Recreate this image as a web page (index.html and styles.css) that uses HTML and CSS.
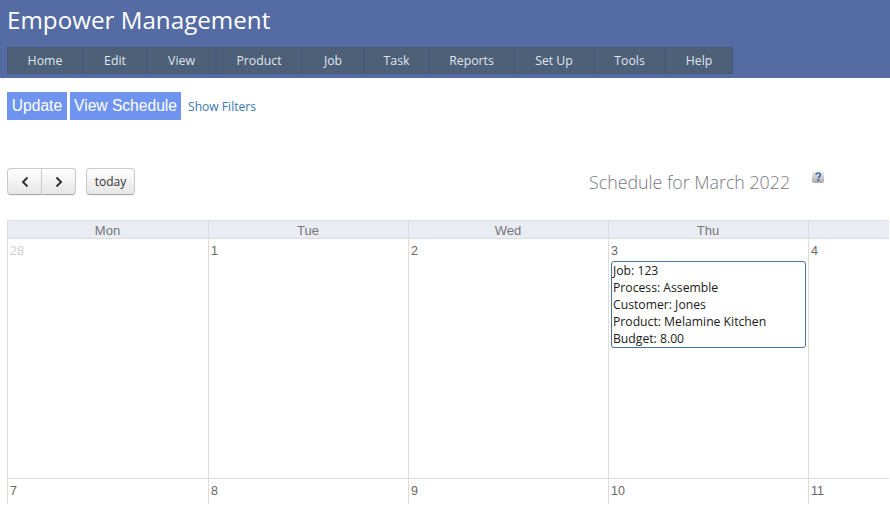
FILE: index.html
```html
<!DOCTYPE html>
<html lang="en">
<head>
<meta charset="utf-8">
<title>Empower Management</title>
<link rel="stylesheet" href="styles.css">
</head>
<body>
<header class="banner">
  <h1 class="brand">Empower Management</h1>
  <nav class="menu">
    <a class="menu-item w-home">Home</a>
    <a class="menu-item w-edit">Edit</a>
    <a class="menu-item w-view">View</a>
    <a class="menu-item w-product">Product</a>
    <a class="menu-item w-job">Job</a>
    <a class="menu-item w-task">Task</a>
    <a class="menu-item w-reports">Reports</a>
    <a class="menu-item w-setup">Set Up</a>
    <a class="menu-item w-tools">Tools</a>
    <a class="menu-item w-help">Help</a>
  </nav>
</header>
<main class="content">
  <div class="actions">
    <button class="action">Update</button>
    <button class="action action-wide">View Schedule</button>
    <a class="filters">Show Filters</a>
  </div>
  <div class="toolbar">
    <div class="nav-group">
      <button class="fc-btn fc-left" aria-label="Previous"><svg width="10" height="12" viewBox="0 0 10 12"><path d="M7.5 1.5 3 6l4.5 4.5" fill="none" stroke="#333" stroke-width="2"/></svg></button>
      <button class="fc-btn fc-right" aria-label="Next"><svg width="10" height="12" viewBox="0 0 10 12"><path d="M2.5 1.5 7 6l-4.5 4.5" fill="none" stroke="#333" stroke-width="2"/></svg></button>
    </div>
    <button class="fc-btn fc-today">today</button>
    <h2 class="title">Schedule for March 2022</h2>
    <svg class="help" width="14" height="15" viewBox="0 0 14 15">
      <defs><linearGradient id="helpbg" x1="0" y1="0" x2="0" y2="1"><stop offset="0" stop-color="#f2f2f2"/><stop offset="1" stop-color="#a9a9a9"/></linearGradient></defs>
      <rect x="1" y="1" width="12" height="12" rx="2" fill="url(#helpbg)"/>
      <path d="M4.8 4.8C5 3.6 6 3 7.1 3c1.3 0 2.2.8 2.2 1.9 0 1.6-2 1.7-2 3.3" fill="none" stroke="#3f68a8" stroke-width="1.7"/>
      <rect x="6.3" y="9.2" width="2" height="1.9" fill="#3f68a8"/>
    </svg>
  </div>
  <div class="calendar">
    <div class="dow">Mon</div><div class="dow">Tue</div><div class="dow">Wed</div><div class="dow">Thu</div><div class="dow"></div>
    <div class="day week-one"><span class="num muted">28</span></div>
    <div class="day week-one"><span class="num">1</span></div>
    <div class="day week-one"><span class="num">2</span></div>
    <div class="day week-one"><span class="num">3</span>
      <div class="event">Job: 123<br>Process: Assemble<br>Customer: Jones<br>Product: Melamine Kitchen<br>Budget: 8.00</div>
    </div>
    <div class="day week-one"><span class="num">4</span></div>
    <div class="day week-two"><span class="num">7</span></div>
    <div class="day week-two"><span class="num">8</span></div>
    <div class="day week-two"><span class="num">9</span></div>
    <div class="day week-two"><span class="num">10</span></div>
    <div class="day week-two"><span class="num">11</span></div>
  </div>
</main>
</body>
</html>
```
FILE: styles.css
```css
* { box-sizing: border-box; }
html, body { margin: 0; padding: 0; height: 508px; overflow: hidden; background: #fff; }
body { font-family: "Open Sans", "Noto Sans", sans-serif; color: #333; }

.banner { height: 78px; background: #546ba3; padding: 0 7px; }
.brand { margin: 0; height: 47px; padding-top: 1px; font-size: 24.2px; line-height: 38px; font-weight: 400; color: #fff; white-space: nowrap; }
.menu { display: flex; width: max-content; height: 27px; background: #4e5f78; border: 1px solid #48597a; }
.menu-item { display: flex; align-items: center; justify-content: center; font-size: 12.3px; color: #dfe6ee; border-right: 2px solid #48597a; }
.menu-item:last-child { border-right: 0; }
.w-home { width: 76px; } .w-edit { width: 64px; } .w-view { width: 69px; } .w-product { width: 86px; } .w-job { width: 62px; }
.w-task { width: 65px; } .w-reports { width: 85px; } .w-setup { width: 80px; } .w-tools { width: 71px; } .w-help { width: 66px; }

.content { padding: 14px 0 0 7px; }
.actions { display: flex; align-items: center; height: 28px; }
.action { height: 28px; width: 60px; padding: 0; margin-right: 3px; border: 0; background: #6f94f0; color: #fff; font: 15.6px "Liberation Sans", Arial, sans-serif; white-space: nowrap; }
.action-wide { width: 111px; margin-right: 7px; }
.filters { font-size: 12.1px; color: #3a75ab; }

.toolbar { display: flex; align-items: flex-start; height: 52px; margin-top: 48px; }
.nav-group { display: flex; }
.fc-btn { height: 27px; padding: 0; background: linear-gradient(#fff, #e6e6e6); border: 1px solid #c9c9c9; border-bottom-color: #aaa; color: #333; display: flex; align-items: center; justify-content: center; box-shadow: inset 0 1px 0 rgba(255,255,255,.6), 0 1px 1px rgba(0,0,0,.05); }
.fc-left { width: 35px; border-radius: 4px 0 0 4px; }
.fc-right { width: 35px; margin-left: -1px; border-radius: 0 4px 4px 0; }
.fc-today { width: 49px; margin-left: 10px; border-radius: 4px; font: 12px "Open Sans", sans-serif; color: #333; }
.title { margin: 2px 0 0 454px; font-size: 17.8px; line-height: 24px; font-weight: 300; color: #77777f; white-space: nowrap; }
.help { margin: 2px 0 0 21px; }

.calendar { display: grid; grid-template-columns: 201px repeat(4, 200px); grid-template-rows: 18px 240px 25px; width: 882px; overflow: hidden; border-top: 1px solid #ddd; border-left: 1px solid #ddd; font-family: "Liberation Sans", Arial, sans-serif; font-size: 13px; }
.dow { background: #e9ecf3; border-right: 1px solid #ddd; border-bottom: 1px solid #ddd; color: #77757a; text-align: center; line-height: 19px; font-size: 13px; padding-right: 1px; }
.day { border-right: 1px solid #ddd; padding: 5px 2px 0; color: #666; }
.week-one { border-bottom: 1px solid #ddd; }
.num { display: block; line-height: 15px; font-size: 12.5px; }
.muted { color: #ccc; }
.event { width: 195px; height: 87px; margin: 2px 0 0 0; padding: 0 1px; border: 1px solid #4f7199; border-radius: 3px; background: #fff; font-family: "Open Sans", "Noto Sans", sans-serif; font-size: 12.2px; line-height: 17px; color: #1a1a1a; }
```
